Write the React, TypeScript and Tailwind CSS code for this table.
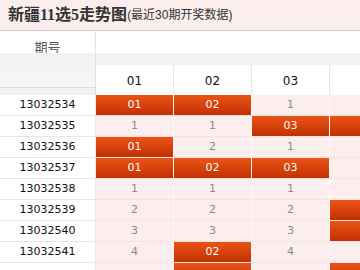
import React from 'react'

interface ICell {
    v: string;
    hit: boolean;
}

interface IRow {
    issue: string;
    cells: ICell[];
}

const h = (v: string): ICell => ({ v, hit: true })
const m = (v: string): ICell => ({ v, hit: false })

// 4th column and the last row run off the edges, their numbers are never visible
const rows: IRow[] = [
    { issue: '13032534', cells: [h('01'), h('02'), m('1'), m('')] },
    { issue: '13032535', cells: [m('1'), m('1'), h('03'), h('')] },
    { issue: '13032536', cells: [h('01'), m('2'), m('1'), m('')] },
    { issue: '13032537', cells: [h('01'), h('02'), h('03'), m('')] },
    { issue: '13032538', cells: [m('1'), m('1'), m('1'), m('')] },
    { issue: '13032539', cells: [m('2'), m('2'), m('2'), h('')] },
    { issue: '13032540', cells: [m('3'), m('3'), m('3'), h('')] },
    { issue: '13032541', cells: [m('4'), h('02'), m('4'), m('')] },
    { issue: '', cells: [m(''), h(''), m(''), h('')] },
]

const cols = ['01', '02', '03', '']

const App = () => {
    return (
        <div className="w-[360px] h-[270px] overflow-hidden bg-white font-['DejaVu_Sans','Noto_Sans_CJK_SC',sans-serif]">
            {/* title bar */}
            <div className="h-[31px] flex items-center pl-2 bg-[#fdeeee] border-b border-[#d2cccc] whitespace-nowrap">
                <span className="text-[16px] font-bold text-[#333] font-['Liberation_Serif','Noto_Sans_CJK_SC',sans-serif] leading-none">新疆11选5走势图</span>
                <span className="text-[12px] text-[#333] font-['Liberation_Sans','Noto_Sans_CJK_SC',sans-serif] leading-none">(最近30期开奖数据)</span>
            </div>

            <div className="mt-px w-[409px]">
                {/* header */}
                <div className="flex h-[63px]">
                    <div className="w-[96px] shrink-0 flex flex-col border-r border-[#e2e2e2]">
                        <div className="h-[21px] bg-white flex justify-center pt-[8px] text-[13px] text-[#555] font-['Noto_Sans_CJK_SC',sans-serif] leading-none">期号</div>
                        <div className="h-[34px] bg-gradient-to-b from-[#f2f2f2] to-[#f6f6f6]"></div>
                        <div className="h-[8px] bg-[#f2f2f2] border-t border-[#dedede]"></div>
                    </div>
                    <div className="flex-1 flex flex-col">
                        <div className="h-[33px] flex flex-col">
                            <div className="h-[21px] bg-white"></div>
                            <div className="h-[12px] bg-[#f3f3f3]"></div>
                        </div>
                        <div className="h-[30px] flex bg-white">
                            {cols.map((c, i) => (
                                <div key={i} className="w-[78px] shrink-0 border-r border-[#e6e6e6] flex items-center justify-center pt-[2px] text-[12px] text-[#111]">{c}</div>
                            ))}
                        </div>
                    </div>
                </div>

                {/* rows */}
                {rows.map((r, ri) => (
                    <div key={ri} className="flex h-[21px]">
                        <div className="w-[96px] shrink-0 bg-white border-b border-r border-[#e6e6e6] flex items-center justify-center text-[11px] text-[#111]">{r.issue}</div>
                        {r.cells.map((c, i) => (
                            <div key={i} className="w-[78px] shrink-0 bg-[#fdeeee] border-r border-b border-r-[#fff8f8] border-b-[#f6e2e2]">
                                {c.hit ? (
                                    <div className="h-full flex items-center justify-center bg-gradient-to-b from-[#ec5315] to-[#c23104] text-white text-[11px]">{c.v}</div>
                                ) : (
                                    <div className="h-full flex items-center justify-center text-[#8a8a8a] text-[11px]">{c.v}</div>
                                )}
                            </div>
                        ))}
                    </div>
                ))}
            </div>
        </div>
    )
}

export default App
